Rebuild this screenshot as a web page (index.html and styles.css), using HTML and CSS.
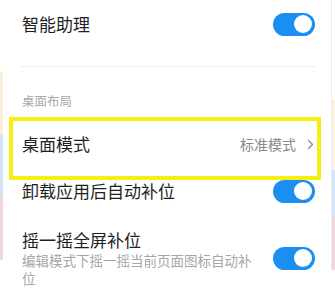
FILE: index.html
```html
<!DOCTYPE html>
<html lang="zh">
<head>
<meta charset="utf-8">
<link rel="stylesheet" href="styles.css">
</head>
<body>
<div class="page">
  <div class="edge edge-left">
    <div class="band beige"></div>
    <div class="band blue"></div>
    <div class="band pink"></div>
  </div>
  <div class="panel">
    <div class="row row-first">
      <div class="title">智能助理</div>
      <div class="switch"><span class="knob"></span></div>
    </div>
    <div class="divider"></div>
    <div class="section">桌面布局</div>
    <div class="row row-mode">
      <div class="title">桌面模式</div>
      <div class="value">标准模式
        <svg class="chev" width="7" height="11" viewBox="0 0 7 11"><path d="M1.5 1.5 L5.5 5.5 L1.5 9.5" fill="none" stroke="#8a8a8a" stroke-width="1.3" stroke-linecap="round" stroke-linejoin="round"/></svg>
      </div>
      <div class="highlight"></div>
    </div>
    <div class="row row-uninstall">
      <div class="title">卸载应用后自动补位</div>
      <div class="switch"><span class="knob"></span></div>
    </div>
    <div class="row row-multi">
      <div class="texts">
        <div class="title">摇一摇全屏补位</div>
        <div class="sub">编辑模式下摇一摇当前页面图标自动补位</div>
      </div>
      <div class="switch"><span class="knob"></span></div>
    </div>
  </div>
  <div class="edge edge-right">
    <div class="band beige"></div>
    <div class="band blue"></div>
    <div class="band pink"></div>
  </div>
</div>
</body>
</html>
```
FILE: styles.css
```css
html, body {
  margin: 0;
  padding: 0;
  background: #ffffff;
}
body {
  font-family: "Noto Sans CJK SC", "Noto Sans", sans-serif;
  color: #1f1f1f;
  width: 335px;
  height: 290px;
  overflow: hidden;
}
.page {
  display: flex;
  height: 290px;
}
.edge {
  width: 3px;
  display: flex;
  flex-direction: column;
}
.edge-left {
  padding-top: 72px;
}
.edge-left .beige { height: 62px; }
.edge-left .blue { height: 63px; }
.edge-left .pink { height: 63px; }
.edge-right {
  width: 4px;
  padding-top: 100px;
  border-left: 1px solid #ececec;
  height: 270px;
  box-sizing: border-box;
}
.edge-right .beige { height: 70px; width: 3px; }
.edge-right .blue { height: 45px; width: 3px; }
.edge-right .pink { height: 55px; width: 3px; }
.beige { background: #fbf1dc; }
.blue { background: #d2e4f6; }
.pink { background: #f2d6df; }
.panel {
  flex: 1;
  min-width: 0;
  padding: 0 16px 0 19px;
  display: flex;
  flex-direction: column;
}
.row {
  position: relative;
  display: flex;
  align-items: center;
  justify-content: space-between;
  height: 48px;
  flex-shrink: 0;
}
.row-uninstall {
  margin-top: -1px;
}
.title {
  font-size: 17px;
  line-height: 22px;
  color: #1f1f1f;
}
.switch {
  width: 42px;
  height: 23px;
  border-radius: 12px;
  background: #1b8ef2;
  display: flex;
  align-items: center;
  justify-content: flex-end;
  padding-right: 3px;
  box-sizing: border-box;
  flex-shrink: 0;
}
.knob {
  width: 18px;
  height: 18px;
  border-radius: 50%;
  background: #ffffff;
}
.divider {
  height: 1px;
  background: #efefef;
  margin: 18px 0 0 -2px;
}
.section {
  font-size: 12.5px;
  line-height: 16px;
  color: #a9a9a9;
  padding: 26px 0 11px;
}
.value {
  display: flex;
  align-items: center;
  gap: 11px;
  font-size: 14px;
  color: #8a8a8a;
  padding-right: 1px;
}
.chev {
  display: block;
}
.highlight {
  position: absolute;
  left: -13px;
  top: -3px;
  width: 312px;
  height: 63px;
  box-sizing: border-box;
  border: 4px solid #f6ef12;
  z-index: 2;
}
.row-multi {
  height: auto;
  padding-top: 14px;
  align-items: center;
}
.texts {
  flex: 0 0 236px;
  width: 236px;
}
.sub {
  font-size: 13.5px;
  line-height: 18px;
  color: #a6a6a6;
}
```
